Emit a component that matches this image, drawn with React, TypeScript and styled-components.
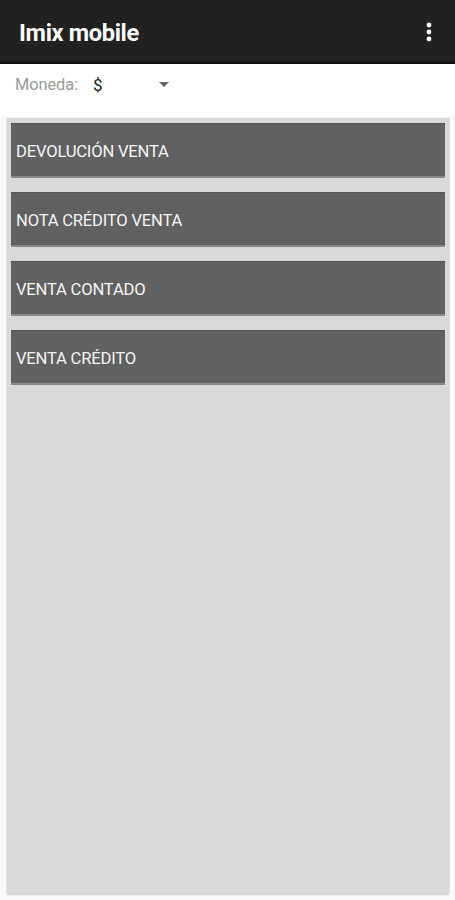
import React from "react";
import styled, { createGlobalStyle } from "styled-components";

const Global = createGlobalStyle`
  html, body { margin: 0; padding: 0; background: #fafafa; }
  body { font-family: Roboto, "Noto Sans", sans-serif; }
  * { box-sizing: border-box; }
`;

const Screen = styled.div`
  width: 455px;
  height: 900px;
  display: flex;
  flex-direction: column;
  background: #fafafa;
  overflow: hidden;
`;

const AppBar = styled.header`
  height: 64px;
  flex: 0 0 64px;
  background: #212121;
  border-bottom: 2px solid #0e0e0e;
  display: flex;
  align-items: center;
  justify-content: space-between;
  padding: 0 14px 0 19px;
`;

const Title = styled.h1`
  margin: 0;
  color: #ffffff;
  font-family: Roboto, sans-serif;
  font-weight: 700;
  font-size: 23.5px;
  letter-spacing: -0.3px;
  padding-top: 4px;
`;

const MenuButton = styled.div`
  width: 24px;
  height: 24px;
  display: flex;
  align-items: center;
  justify-content: center;
  margin-top: 2px;
`;

const SpinnerRow = styled.div`
  height: 52px;
  flex: 0 0 52px;
  display: flex;
  align-items: flex-start;
  padding: 11px 0 0 15px;
  background: #ffffff;
`;

const Label = styled.span`
  color: #9a9a9a;
  font-size: 16.3px;
  width: 78px;
`;

const Value = styled.span`
  color: #222;
  font-size: 17px;
  width: 66px;
`;

const Arrow = styled.div`
  margin-top: 7px;
  width: 0;
  height: 0;
  border-left: 5px solid transparent;
  border-right: 5px solid transparent;
  border-top: 5px solid #666;
`;

const Panel = styled.div`
  margin: 2px 6px 6px 7px;
  flex: 1;
  background: #d9d9d9;
  box-shadow: 0 1px 2px rgba(0, 0, 0, 0.18), 0 0 1px rgba(0, 0, 0, 0.12);
  display: flex;
  flex-direction: column;
  gap: 14px;
  padding: 5px 4px 0 4px;
`;

const ActionButton = styled.button`
  height: 55px;
  width: 100%;
  background: #616161;
  border: none;
  border-top: 1px solid #555;
  border-bottom: 2px solid #8a8a8a;
  color: #f5f5f5;
  font-family: Roboto, sans-serif;
  font-size: 16.6px;
  text-align: left;
  padding: 2px 5px 0 5px;
  text-transform: uppercase;
  letter-spacing: -0.2px;
`;

const items = ["Devolución venta", "Nota crédito venta", "Venta contado", "Venta crédito"];

export default function App() {
  return (
    <>
      <Global />
      <Screen>
        <AppBar>
          <Title>Imix mobile</Title>
          <MenuButton>
            <svg width="6" height="20" viewBox="0 0 6 20">
              <circle cx="3" cy="3" r="2.4" fill="#fff" />
              <circle cx="3" cy="10" r="2.4" fill="#fff" />
              <circle cx="3" cy="17" r="2.4" fill="#fff" />
            </svg>
          </MenuButton>
        </AppBar>
        <SpinnerRow>
          <Label>Moneda:</Label>
          <Value>$</Value>
          <Arrow />
        </SpinnerRow>
        <Panel>
          {items.map((t) => (
            <ActionButton key={t}>{t}</ActionButton>
          ))}
        </Panel>
      </Screen>
    </>
  );
}
